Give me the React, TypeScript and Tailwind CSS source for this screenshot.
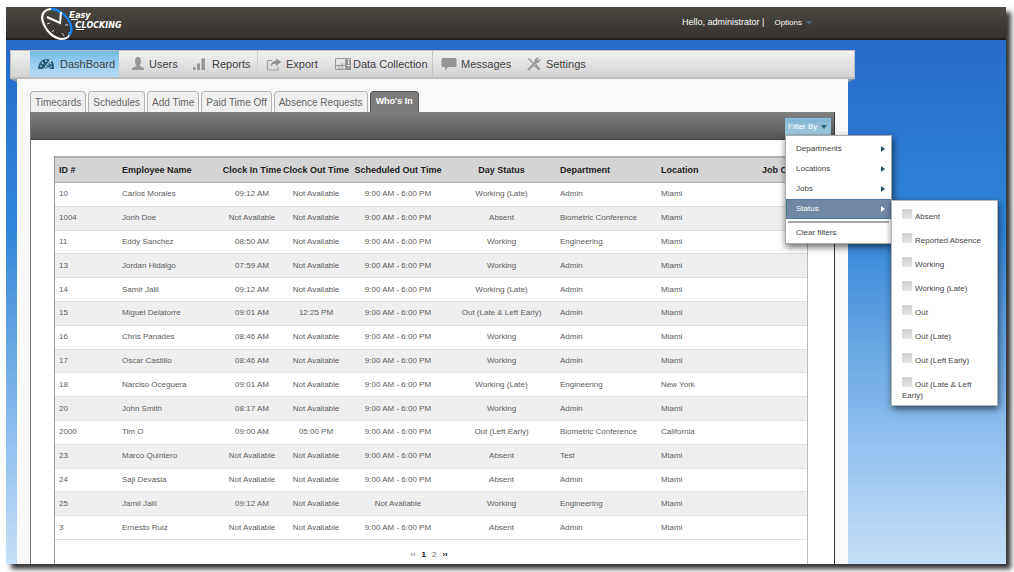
import React from 'react';

const navItems = [
  { name: 'DashBoard', icon: 'gauge', style: 'w-[89px] pl-2 gap-1.5 bg-linear-to-b from-[#76bbe8] to-[#b9def6]' },
  { name: 'Users', icon: 'user', style: 'w-[65px] pl-3 gap-0.5' },
  { name: 'Reports', icon: 'bars', style: 'w-[74px] pl-2 gap-1 border-r border-[#d0d0d0]' },
  { name: 'Export', icon: 'export', style: 'w-[67px] pl-2 gap-1' },
  { name: 'Data Collection', icon: 'device', style: 'w-[108px] pl-2.5 gap-0.5 border-r border-[#c4c4c4]' },
  { name: 'Messages', icon: 'bubble', style: 'w-[83px] pl-2 gap-1' },
  { name: 'Settings', icon: 'tools', style: 'w-[80px] pl-2.5 gap-1' }
];

const tabs = ['Timecards', 'Schedules', 'Add Time', 'Paid Time Off', 'Absence Requests', "Who's In"];

const NA = 'Not Available';
const SHIFT = '9:00 AM - 6:00 PM';

const employees = [
  ['10', 'Carlos Morales', '09:12 AM', NA, SHIFT, 'Working (Late)', 'Admin', 'Miami'],
  ['1004', 'Jonh Doe', NA, NA, SHIFT, 'Absent', 'Biometric Conference', 'Miami'],
  ['11', 'Eddy Sanchez', '08:50 AM', NA, SHIFT, 'Working', 'Engineering', 'Miami'],
  ['13', 'Jordan Hidalgo', '07:59 AM', NA, SHIFT, 'Working', 'Admin', 'Miami'],
  ['14', 'Samir Jalil', '09:12 AM', NA, SHIFT, 'Working (Late)', 'Admin', 'Miami'],
  ['15', 'Miguel Delatorre', '09:01 AM', '12:25 PM', SHIFT, 'Out (Late & Left Early)', 'Admin', 'Miami'],
  ['16', 'Chris Panades', '08:46 AM', NA, SHIFT, 'Working', 'Admin', 'Miami'],
  ['17', 'Oscar Castillo', '08:46 AM', NA, SHIFT, 'Working', 'Admin', 'Miami'],
  ['18', 'Narciso Oceguera', '09:01 AM', NA, SHIFT, 'Working (Late)', 'Engineering', 'New York'],
  ['20', 'John Smith', '08:17 AM', NA, SHIFT, 'Working', 'Admin', 'Miami'],
  ['2000', 'Tim O', '09:00 AM', '05:00 PM', SHIFT, 'Out (Left Early)', 'Biometric Conference', 'California'],
  ['23', 'Marco Quintero', NA, NA, SHIFT, 'Absent', 'Test', 'Miami'],
  ['24', 'Saji Devasia', NA, NA, SHIFT, 'Absent', 'Admin', 'Miami'],
  ['25', 'Jamil Jalil', '09:12 AM', NA, NA, 'Working', 'Engineering', 'Miami'],
  ['3', 'Ernesto Ruiz', NA, NA, SHIFT, 'Absent', 'Admin', 'Miami']
];

const columns = [
  { title: 'ID #', width: 'w-[63px]', align: 'text-left' },
  { title: 'Employee Name', width: 'w-[103px]', align: 'text-left' },
  { title: 'Clock In Time', width: 'w-[62px]', align: 'text-center' },
  { title: 'Clock Out Time', width: 'w-[66px]', align: 'text-center' },
  { title: 'Scheduled Out Time', width: 'w-[98px]', align: 'text-center' },
  { title: 'Day Status', width: 'w-[109px]', align: 'text-center' },
  { title: 'Department', width: 'w-[101px]', align: 'text-left' },
  { title: 'Location', width: 'w-[101px]', align: 'text-left' },
  { title: 'Job Code', width: '', align: 'text-left' }
];

const statuses = [
  'Absent',
  'Reported Absence',
  'Working',
  'Working (Late)',
  'Out',
  'Out (Late)',
  'Out (Left Early)',
  'Out (Late & Left Early)'
];

const NavIcon = ({ name }: { name: string }) => (
  <svg viewBox="0 0 16 16" className="w-4 h-4 shrink-0" fill="none">
    {name === 'gauge' && (
      <>
        <path d="M0 13C0 7 4 3 9 3c4 0 7 3 7 7v3h-4l-1-2-4 2Z" fill="#2a6080" />
        <path d="M2 10h2M4 6l1 2M8 4v2M13 7l-1 1M14 11h-2" stroke="#b4dcf3" strokeWidth="1.2" />
        <path d="M6 14 13 4" stroke="#c5e5f8" strokeWidth="2" />
        <path d="m7 13 5-7" stroke="#2a6080" />
      </>
    )}
    {name === 'user' && (
      <path d="M7 1c2 0 3 1.500 3 4 0 1.500-.6 3-1.300 4v1l3.300 1.500c.7.4 1 1 1 2V14H1v-.5c0-1 .3-1.600 1-2L5.300 10V9C4.600 8 4 6.500 4 5c0-2.500 1-4 3-4Z" fill="#979797" />
    )}
    {name === 'bars' && (
      <path d="M1 11h2.500v3H1zM5 7.500h3V14H5zM9.500 2.500H13V14H9.500z" fill="#959595" />
    )}
    {name === 'export' && (
      <>
        <path d="M6 4.500H2.500a1 1 0 0 0-1 1V13a1 1 0 0 0 1 1H11a1 1 0 0 0 1-1v-2" stroke="#a0a0a0" strokeWidth="1.200" />
        <path d="M10 2.500 15.500 6 10 10V7.800c-3 0-4.500 1-5.500 3C4.700 7 6.500 5 10 4.700Z" fill="#929292" />
      </>
    )}
    {name === 'device' && (
      <>
        <path d="M.5 2.500h10v11H.5zM.5 9.500h10M4 10v4M7 7v7" stroke="#999" />
        <path d="M11 2h5v12h-5z" fill="#949494" />
        <path d="M12.500 3.500h2.500M13.500 5v3M12 9.500h3" stroke="#eee" />
      </>
    )}
    {name === 'bubble' && (
      <path d="M2 2h12a1.500 1.500 0 0 1 1.500 1.500v6A1.500 1.500 0 0 1 14 11H7l-3 3.200V11H2A1.500 1.500 0 0 1 .5 9.500v-6A1.500 1.500 0 0 1 2 2Z" fill="#949494" />
    )}
    {name === 'tools' && (
      <>
        <path d="m2.500 2.500 6 6" stroke="#9a9a9a" strokeWidth="1.500" />
        <path d="m9 9 4.500 4.500" stroke="#9a9a9a" strokeWidth="2.800" />
        <path d="m2 14 8-8" stroke="#9a9a9a" strokeWidth="2.400" />
        <path d="M14 3.500 12.500 5 11 3.500 12.500 2A3 3 0 0 0 9.200 6 3 3 0 0 0 14 3.500Z" fill="#9a9a9a" stroke="#9a9a9a" />
      </>
    )}
  </svg>
);

const Logo = () => (
  <svg viewBox="0 0 92 34" className="w-[92px] h-[34px]" fill="none">
    <path d="M12 2C5 2 0 7 3 15c3 9 11 17 19 17 5 0 8-3 8-7" stroke="#fff" strokeWidth="2.200" />
    <path d="M11 2c8 0 18 8 20 17 1 4 0 7-2 9" stroke="#1583f2" strokeWidth="2.500" />
    <path d="m7 10 13 6 1-11" stroke="#fff" strokeWidth="2" />
    <path d="m7 17 3-1M12 25l2-2M24 29l-2-3M28 18h-3" stroke="#ddd" />
    <g fill="#fff" fontFamily="DejaVu Sans, sans-serif" fontWeight="bold" fontStyle="italic">
      <text x="29" y="11" fontSize="9">E<tspan fontSize="8">asy</tspan></text>
      <text x="35" y="21" fontSize="9">C<tspan fontSize="8">LOCKING</tspan></text>
    </g>
    <path d="M31 12.500h7M36 22.500h8" stroke="#fff" />
  </svg>
);

const Arrow = ({ color }: { color: string }) => (
  <svg viewBox="0 0 4 6" className="w-1 h-1.5" fill={color}>
    <path d="M0 0 4 3 0 6Z" />
  </svg>
);

const Caret = ({ color }: { color: string }) => (
  <svg viewBox="0 0 6 4" className="w-1.5 h-1" fill={color}>
    <path d="M0 0h6L3 4Z" />
  </svg>
);

const StatusMenu = () => (
  <div className="absolute left-full top-[64px] w-[107px] bg-white border border-[#b5b5b5] shadow-[1px_3px_7px_rgba(0,0,0,0.6)] px-2.5 pt-2 pb-1">
    {statuses.map((status) => (
      <label key={status} className="block min-h-6 text-[8px] leading-[11px] text-[#444]">
        <input
          type="checkbox"
          className="appearance-none inline-block w-2.5 h-2.5 mr-[3px] align-baseline bg-linear-to-b from-[#d0d0d0] to-[#e6e6e6]"
        />
        {status}
      </label>
    ))}
  </div>
);

const FilterMenu = () => (
  <div className="relative z-10">
    <button className="flex items-center gap-1 h-[17px] w-[46px] pl-0.5 text-[8px] text-white whitespace-nowrap bg-linear-to-b from-[#82b5d3] to-[#a1cae2] border border-[#8cc0de]">
      Filter By
      <Caret color="#33617c" />
    </button>
    <div className="absolute left-0 top-full w-[107px] bg-white border border-[#aaa] shadow-[1px_3px_7px_rgba(0,0,0,0.6)] pt-[3px] text-[8px] text-[#444]">
      {['Departments', 'Locations', 'Jobs'].map((item) => (
        <button key={item} className="flex items-center justify-between w-full h-5 pl-2.5 pr-1.5">
          {item}
          <Arrow color="#24526b" />
        </button>
      ))}
      <button className="flex items-center justify-between w-full h-5 pl-[9px] pr-[5px] text-white bg-[#7187a6] border border-[#4d7896]">
        Status
        <Arrow color="#fff" />
      </button>
      <div className="mx-0.5 mt-0.5 h-0.5 bg-[#a6a3a8]" />
      <button className="flex items-center w-full h-5 pl-2.5">Clear filters</button>
      <StatusMenu />
    </div>
  </div>
);

const EmployeeTable = () => (
  <table className="table-fixed w-full h-[384px] border-collapse text-[8px] leading-3 text-[#5c5c5c] whitespace-nowrap">
    <thead>
      <tr className="bg-[#d4d4d4] border-t-2 border-b border-[#b0b0b0] text-[9px] text-[#1c1c1c]">
        {columns.map((column) => (
          <th key={column.title} scope="col" className={`${column.width} ${column.align} py-1.5 font-bold`}>
            <div className={column.align === 'text-left' ? 'pl-1' : 'overflow-hidden'}>{column.title}</div>
          </th>
        ))}
      </tr>
    </thead>
    <tbody>
      {employees.map((row) => (
        <tr key={row[0]} className="even:bg-[#efefef] border-b border-[#dedede]">
          {columns.map((column, index) => (
            <td key={column.title} className={`${column.align === 'text-left' ? 'pl-1' : ''} ${column.align} py-[5px]`}>
              {row[index]}
            </td>
          ))}
        </tr>
      ))}
    </tbody>
  </table>
);

const App = () => {
  return (
    <div className="min-h-screen flex flex-col overflow-hidden bg-white pl-1.5 pr-2 pt-[7px] pb-2 font-['Liberation_Sans',Arial,sans-serif]">
      <div className="flex-1 flex flex-col bg-linear-to-b from-[#2666c8] via-[#2f86d8] via-40% to-[#c5e0f8] shadow-[5px_5px_5px_rgba(0,0,0,0.8)]">
        <header className="flex items-start justify-between h-[33px] pl-[34px] pr-[194px] bg-linear-to-b from-[#4b4842] to-[#35322e] border-b-2 border-[#1f1c1a] text-white">
          <Logo />
          <div className="flex items-center h-8 text-[9px]">
            <span>Hello, administrator |</span>
            <button className="flex items-center gap-1 ml-2.5 text-[8px]">
              Options
              <Caret color="#446477" />
            </button>
          </div>
        </header>

        <div className="flex-1 flex flex-col mt-2.5 ml-1 mr-[151px]">
          <nav className="flex h-[29px] pl-[19px] bg-linear-to-b from-[#f1f1f1] to-[#d3d3d3] border border-b-2 border-[#bdbdbd]">
            {navItems.map((item) => (
              <a key={item.name} href="#" className={`flex items-center text-[11px] text-[#444] whitespace-nowrap ${item.style}`}>
                <NavIcon name={item.icon} />
                {item.name}
              </a>
            ))}
          </nav>

          <main className="relative flex-1 flex flex-col mx-[7px] px-[13px] pt-3 bg-[#f9f9f9]">
            <svg viewBox="0 0 7 3" className="absolute top-0 right-full w-[7px] h-[3px]">
              <path d="M0 0h7v3Z" fill="#8d9aa8" />
            </svg>
            <svg viewBox="0 0 7 3" className="absolute top-0 left-full w-[7px] h-[3px]">
              <path d="M0 0h7L0 3Z" fill="#8d9aa8" />
            </svg>
            <div className="flex items-end gap-0.5">
              {tabs.map((tab) => (
                <button
                  key={tab}
                  className={
                    tab === "Who's In"
                      ? 'h-[21px] px-[5px] text-[9px] font-bold text-white bg-[#7c7c7c] border border-b-0 border-[#555] rounded-t-sm'
                      : 'h-[21px] px-1 text-[10px] text-[#666] bg-[#f0f0f0] border border-b-0 border-[#b3b3b3] rounded-t-sm'
                  }
                >
                  {tab}
                </button>
              ))}
            </div>
            <section className="flex-1 flex flex-col bg-white border-x border-l-[#777] border-r-[#333]">
              <div className="flex items-end justify-end h-7 pr-[3px] pb-1 bg-linear-to-b from-[#808080] to-[#555] border-b border-[#3f3f3f]">
                <FilterMenu />
              </div>
              <div className="flex-1 flex flex-col mt-4 ml-[23px] mr-[26px] border-x border-l-[#999] border-r-[#bbb]">
                <EmployeeTable />
                <div className="flex items-center justify-center gap-1.5 h-6 pt-1.5 pr-1 text-[8px] text-[#666]">
                  <a href="#">‹‹</a>
                  <a href="#" className="font-bold text-black">1</a>
                  <a href="#">2</a>
                  <a href="#" className="font-bold text-black">››</a>
                </div>
              </div>
            </section>
          </main>
        </div>
      </div>
    </div>
  );
};

export default App;
